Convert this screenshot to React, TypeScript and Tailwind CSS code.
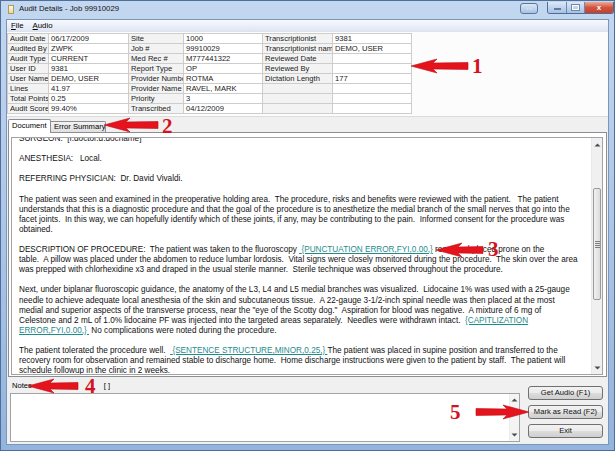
import React from "react";

const rows: string[][] = [
  ["Audit Date", "06/17/2009", "Site", "1000", "Transcriptionist", "9381"],
  ["Audited By", "ZWPK", "Job #", "99910029", "Transcriptionist name", "DEMO, USER"],
  ["Audit Type", "CURRENT", "Med Rec #", "M777441322", "Reviewed Date", ""],
  ["User ID", "9381", "Report Type", "OP", "Reviewed By", ""],
  ["User Name", "DEMO, USER", "Provider Number", "ROTMA", "Dictation Length", "177"],
  ["Lines", "41.97", "Provider Name", "RAVEL, MARK", "", ""],
  ["Total Points", "0.25", "Priority", "3", "", ""],
  ["Audit Score", "99.40%", "Transcribed", "04/12/2009", "", ""],
];

function Err({ children }: { children: React.ReactNode }) {
  return <span className="text-[#1f8c8c] underline decoration-[#1f8c8c]">{children}</span>;
}

function Line({ children }: { children?: React.ReactNode }) {
  return <div className="h-[10.1px] whitespace-pre">{children ?? " "}</div>;
}

function UpArrow() {
  return (
    <svg width="7" height="4" viewBox="0 0 7 4">
      <path d="M0.5 3.5 L3.5 0.5 L6.5 3.5 Z" fill="#4d4d4d" />
    </svg>
  );
}
function DownArrow() {
  return (
    <svg width="7" height="4" viewBox="0 0 7 4">
      <path d="M0.5 0.5 L3.5 3.5 L6.5 0.5 Z" fill="#4d4d4d" />
    </svg>
  );
}

function Arrow({ tx, ty, tail, right }: { tx: number; ty: number; tail: number; right?: boolean }) {
  const hl = 26;
  const hh = 7;
  const st = 3;
  const s = right ? -1 : 1;
  const pts = [
    [tx, ty],
    [tx + s * hl, ty - hh],
    [tx + s * (hl - 4), ty - st],
    [tail, ty - st - 0.5],
    [tail, ty + st + 0.5],
    [tx + s * (hl - 4), ty + st],
    [tx + s * hl, ty + hh],
  ]
    .map((p) => p.join(","))
    .join(" ");
  return <polygon points={pts} fill="#e5131c" stroke="#c00d14" strokeWidth="0.6" />;
}

export default function App() {
  return (
    <div className="relative w-[615px] h-[451px] overflow-hidden flex flex-col bg-gradient-to-b from-[#c3d7f0] via-[#acc6e8] to-[#93b4dd] border border-[#4f6f99] font-['Liberation_Sans',Arial,sans-serif] text-black">
      {/* Title bar */}
      <div className="h-[18px] flex items-start shrink-0">
        <div className="ml-[7px] mt-[4px] w-[6px] h-[9px] bg-gradient-to-b from-[#fffbe6] to-[#e8d9a0] border border-[#b09a5a]" />
        <div className="ml-[5px] mt-[3px] text-[7.8px] leading-[10px] text-[#151515]">Audit Details - Job 99910029</div>
        <div className="ml-auto flex items-start">
          <div className="mt-[2px] w-[18px] h-[11px] rounded-[3px] border border-[#58779f] bg-gradient-to-b from-[#dbe7f6] to-[#a9c2e2] flex items-center justify-center text-white text-[8px] leading-none font-bold">
            ⇔
          </div>
          <div className="ml-[9px] mr-[0px] mt-[1px] flex h-[12px] rounded-b-[3px] border border-t-0 border-[#4d6d97] overflow-hidden">
            <div className="w-[19px] bg-gradient-to-b from-[#dce8f6] to-[#a7c1e2] border-r border-[#6b88ae] flex items-center justify-center">
              <div className="mt-[3px] w-[7px] h-[2px] bg-white border border-[#5c7aa2]" />
            </div>
            <div className="w-[18px] bg-gradient-to-b from-[#dce8f6] to-[#a7c1e2] border-r border-[#6b88ae] flex items-center justify-center">
              <div className="w-[7px] h-[5px] border-[1.5px] border-white outline outline-1 outline-[#6b88ae]" />
            </div>
            <div className="w-[28px] bg-gradient-to-b from-[#e8a99a] via-[#d2533c] to-[#c4412c] flex items-center justify-center text-white text-[8px] font-bold leading-none">
              x
            </div>
          </div>
        </div>
      </div>

      {/* Client */}
      <div className="flex-1 ml-[5px] mr-[5px] mb-[5px] bg-[#f0f0f0] flex flex-col border border-[#7b96ba]">
        {/* Menu bar */}
        <div className="h-[12px] shrink-0 bg-gradient-to-b from-[#f7f9fd] to-[#dfe7f3] flex items-center text-[7.8px] leading-none border-b border-[#dde3ec]">
          <span className="ml-[4px]"><span className="underline">F</span>ile</span>
          <span className="ml-[9px]"><span className="underline">A</span>udio</span>
        </div>

        {/* Top info panel */}
        <div className="h-[85px] shrink-0 bg-[#fcfcfc] pt-[1px] border-b border-[#dcdcdc]">
          <div className="grid grid-cols-[41px_80px_55px_79px_70px_79px] w-fit border-l border-t border-[#cdcdcd]">
            {rows.map((r, i) =>
              r.map((c, j) => (
                <div
                  key={i + "-" + j}
                  className={
                    "h-[10px] border-r border-b border-[#cdcdcd] px-[2px] text-[7.6px] leading-[9px] whitespace-nowrap overflow-hidden text-[#1a1a1a] " +
                    (j % 2 === 0 ? "bg-[#f3f3f3]" : "bg-white")
                  }
                >
                  {c}
                </div>
              ))
            )}
          </div>
        </div>

        {/* Tabs */}
        <div className="h-[15px] shrink-0 flex items-end pl-[1px]">
          <div className="relative z-10 -mb-px h-[14px] w-[43px] bg-white border border-b-0 border-[#8c8e94] rounded-t-[2px] text-[7.6px] leading-[12px] pl-[3px] whitespace-nowrap">
            Document
          </div>
          <div className="h-[11px] w-[55px] bg-gradient-to-b from-[#f3f3f3] to-[#e0e0e0] border border-l-0 border-b-0 border-[#8c8e94] rounded-tr-[2px] text-[7.6px] leading-[10px] pl-[3px] whitespace-nowrap overflow-hidden">
            Error Summary
          </div>
        </div>

        {/* Tab page */}
        <div className="h-[245px] shrink-0 ml-[1px] mr-[1px] bg-white border border-[#8c8e94] pt-[4px] pl-[2px] pr-[3px] pb-[1px] flex">
          <div className="flex-1 flex border border-[#a3a3a3] overflow-hidden">
            <div className="flex-1 overflow-hidden pl-[7px]">
              <div className="-mt-[4px] text-[8.2px] leading-[10.1px] text-[#111]">
                <Line>SURGEON:  [f.doctor.d.docname]</Line>
                <Line />
                <Line>ANESTHESIA:   Local.</Line>
                <Line />
                <Line>REFERRING PHYSICIAN:  Dr. David Vivaldi.</Line>
                <Line />
                <Line>The patient was seen and examined in the preoperative holding area.  The procedure, risks and benefits were reviewed with the patient.   The patient</Line>
                <Line>understands that this is a diagnostic procedure and that the goal of the procedure is to anesthetize the medial branch of the small nerves that go into the</Line>
                <Line>facet joints.  In this way, we can hopefully identify which of these joints, if any, may be contributing to the pain.  Informed consent for the procedure was</Line>
                <Line>obtained.</Line>
                <Line />
                <Line>
                  DESCRIPTION OF PROCEDURE:  The patient was taken to the fluoroscopy <Err> {"{PUNCTUATION ERROR,FYI,0.00,}"}</Err> room and placed prone on the
                </Line>
                <Line>table.  A pillow was placed under the abdomen to reduce lumbar lordosis.  Vital signs were closely monitored during the procedure.  The skin over the area</Line>
                <Line>was prepped with chlorhexidine x3 and draped in the usual sterile manner.  Sterile technique was observed throughout the procedure.</Line>
                <Line />
                <Line>Next, under biplanar fluoroscopic guidance, the anatomy of the L3, L4 and L5 medial branches was visualized.  Lidocaine 1% was used with a 25-gauge</Line>
                <Line>needle to achieve adequate local anesthesia of the skin and subcutaneous tissue.  A 22-gauge 3-1/2-inch spinal needle was then placed at the most</Line>
                <Line>medial and superior aspects of the transverse process, near the "eye of the Scotty dog."  Aspiration for blood was negative.  A mixture of 6 mg of</Line>
                <Line>
                  Celestone and 2 mL of 1.0% lidocaine PF was injected into the targeted areas separately.  Needles were withdrawn intact.  <Err>{"{CAPITLIZATION"}</Err>
                </Line>
                <Line>
                  <Err>{"ERROR,FYI,0.00,} "}</Err> No complications were noted during the procedure.
                </Line>
                <Line />
                <Line>
                  The patient tolerated the procedure well.  <Err> {"{SENTENCE STRUCTURE,MINOR,0.25,} "}</Err>The patient was placed in supine position and transferred to the
                </Line>
                <Line>recovery room for observation and remained stable to discharge home.  Home discharge instructions were given to the patient by staff.  The patient will</Line>
                <Line>schedule followup in the clinic in 2 weeks.</Line>
              </div>
            </div>
            {/* scrollbar */}
            <div className="w-[11px] shrink-0 bg-[#f0f0f0] border-l border-[#e8e8e8] flex flex-col items-center">
              <div className="h-[13px] flex items-center justify-center"><UpArrow /></div>
              <div className="flex-1 w-full px-[1px]">
                <div className="h-[37px]" />
                <div className="h-[112px] rounded-[2px] border border-[#9a9a9a] bg-gradient-to-r from-[#f1f1f1] to-[#dcdcdc] flex flex-col items-center justify-center gap-[1px]">
                  <div className="w-[5px] h-px bg-[#7d7d7d]" />
                  <div className="w-[5px] h-px bg-[#7d7d7d]" />
                  <div className="w-[5px] h-px bg-[#7d7d7d]" />
                  <div className="w-[5px] h-px bg-[#7d7d7d]" />
                </div>
              </div>
              <div className="h-[13px] flex items-center justify-center"><DownArrow /></div>
            </div>
          </div>
        </div>

        {/* Bottom */}
        <div className="flex-1 flex">
          <div className="flex-1 flex flex-col pl-[3px] pb-[2px]">
            <div className="h-[16px] flex items-center pt-[2px] text-[7.6px] leading-none">
              <span className="ml-[2px]">Notes</span>
              <span className="ml-[72px]">[ ]</span>
            </div>
            <div className="flex-1 bg-white border border-[#a3a3a3] flex justify-end">
              <div className="w-[10px] bg-[#f4f4f4] border-l border-[#ececec] flex flex-col items-center justify-between py-[4px]">
                <UpArrow />
                <DownArrow />
              </div>
            </div>
          </div>
          <div className="w-[75px] ml-[8px] mr-[5px] pt-[9px] flex flex-col gap-[5px]">
            {["Get Audio (F1)", "Mark as Read (F2)", "Exit"].map((b) => (
              <div
                key={b}
                className="h-[14px] rounded-[3px] border border-[#707070] bg-[linear-gradient(#f2f2f2_0%,#ebebeb_50%,#dddddd_50%,#cfcfcf_100%)] flex items-center justify-center text-[7.6px] leading-none text-[#111]"
              >
                {b}
              </div>
            ))}
          </div>
        </div>
      </div>

      {/* Annotation arrows */}
      <svg className="absolute left-0 top-0 pointer-events-none" width="615" height="451" viewBox="0 0 615 451">
        <Arrow tx={410} ty={65} tail={467} />
        <Arrow tx={103} ty={124} tail={157} />
        <Arrow tx={435} ty={249} tail={482} />
        <Arrow tx={27} ty={385} tail={77} />
        <Arrow tx={528} ty={411} tail={475} right />
        <g fill="#d4121b" fontFamily="'Liberation Serif', 'Times New Roman', serif" fontWeight="bold" fontSize="21">
          <text x="471" y="72">1</text>
          <text x="161" y="132">2</text>
          <text x="487" y="255">3</text>
          <text x="84" y="392">4</text>
          <text x="449" y="418">5</text>
        </g>
      </svg>
    </div>
  );
}
